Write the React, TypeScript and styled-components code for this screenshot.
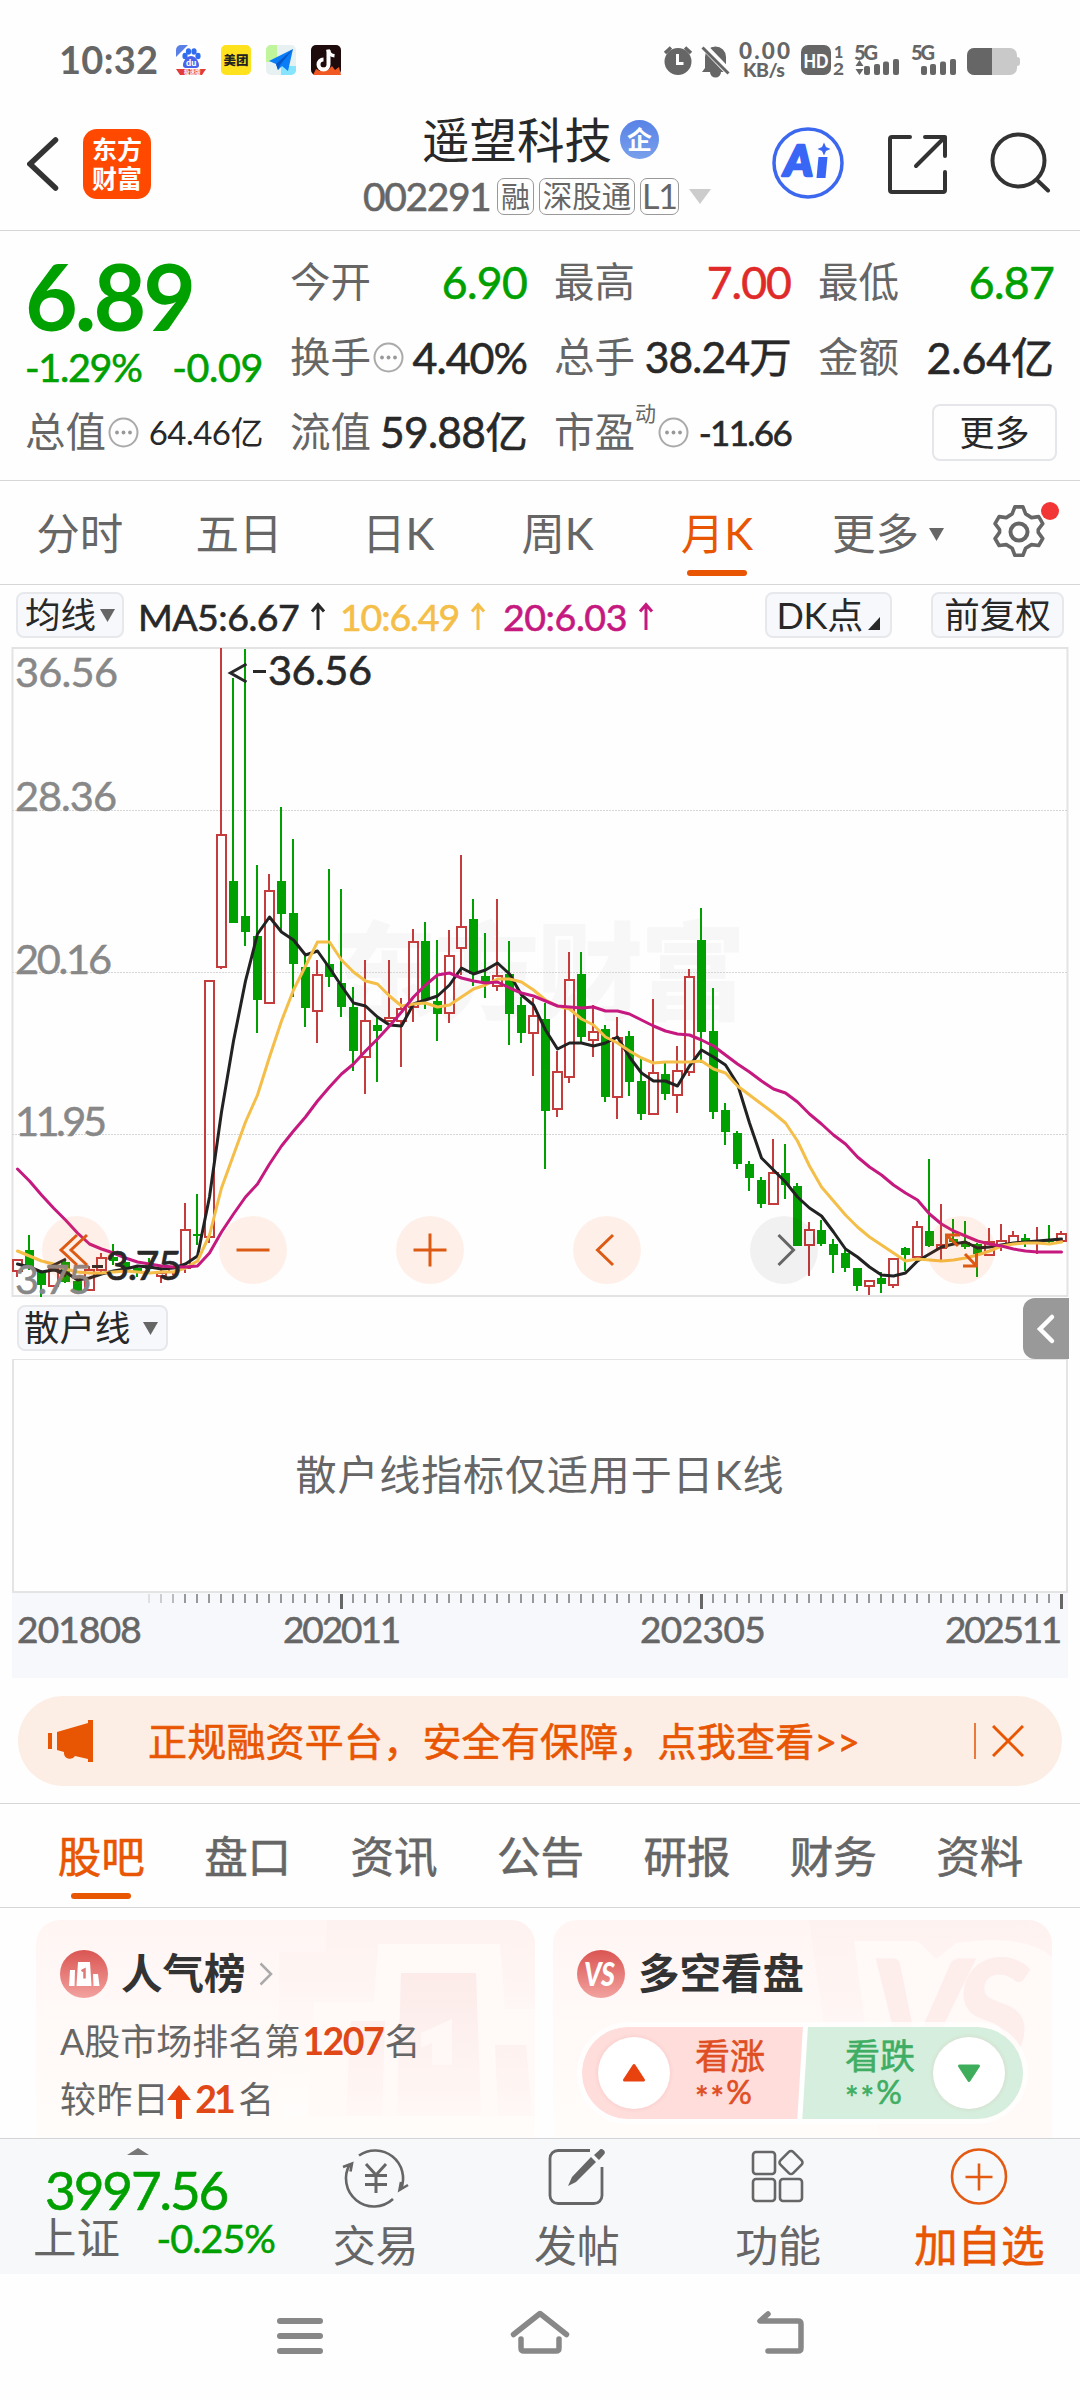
import React from 'react';
import styled, { createGlobalStyle } from 'styled-components';

const GREEN = '#00a000';
const RED = '#e02a2a';
const ORANGE = '#e85604';
const GREY = '#666';
const DARK = '#282828';
const RULE = '#d6d6d6';

const Global = createGlobalStyle`
  *, *::before, *::after { box-sizing: border-box; }
  body { margin: 0; background: #fff; }
  svg { display: block; flex: none; }
`;

const Screen = styled.main`
  width: 1080px;
  height: 2400px;
  overflow: hidden;
  display: flex;
  flex-direction: column;
  background: #fefefe;
  color: ${DARK};
  font-family: Lato, 'Noto Sans CJK SC', sans-serif;
`;

const Txt = styled.span<{ $s: number; $c?: string; $w?: number; $ls?: number }>`
  font-size: ${p => p.$s}px;
  color: ${p => p.$c ?? DARK};
  font-weight: ${p => p.$w ?? 400};
  letter-spacing: ${p => p.$ls ?? 0}px;
  line-height: 1;
  white-space: nowrap;
`;
const Num = styled(Txt)`
  -webkit-text-stroke: 0.6px currentColor;
`;

/* ---------- status bar ---------- */
const StatusBar = styled.div`
  height: 118px;
  padding: 40px 60px 0 59px;
  display: flex;
  align-items: flex-start;
`;
const Clock = styled.div`
  width: 117px;
  height: 38px;
  display: flex;
  align-items: center;
`;
const AppIcons = styled.div`
  display: flex;
  gap: 15px;
  padding-top: 5px;
`;
const StatusRight = styled.div`
  margin-left: auto;
  margin-top: -2px;
  display: flex;
`;

const StatusIcons = () => (
  <svg width="360" height="46" viewBox="660 38 360 46" fill={GREY} fontFamily="Lato, sans-serif" fontWeight="900">
    <circle cx="678" cy="61.500" r="13.500" />
    <path d="M665 53l6-5.500M691 53l-6-5.500" stroke={GREY} strokeWidth="3.500" />
    <path d="M677.500 54v9.500h6" stroke="#fff" strokeWidth="3" fill="none" />
    <path d="M705 68v-11a10.500 10.500 0 0 1 21 0v11l3 4h-27z M710 72a5.500 5.500 0 0 0 11 0z" />
    <path d="M703.500 46l26 27" stroke="#fefefe" strokeWidth="7" />
    <path d="M702.500 47.500l26 26" stroke={GREY} strokeWidth="3" />
    <text x="739" y="59" fontSize="22.500" textLength="51">0.00</text>
    <text x="743" y="77" fontSize="19.500" textLength="42">KB/s</text>
    <rect x="801" y="45" width="30" height="30" rx="7" />
    <text x="803.500" y="67.500" fontSize="19" fill="#fff" textLength="25" lengthAdjust="spacingAndGlyphs">HD</text>
    <text x="834" y="57.500" fontSize="16">1</text>
    <text x="833" y="74.500" fontSize="16" textLength="11" lengthAdjust="spacingAndGlyphs">2</text>
    <text x="854" y="59.500" fontSize="20" textLength="24">5G</text>
    <path d="M859.500 60l4 6h-8zM859.500 75l4-6h-8z" />
    <rect x="864" y="66" width="6" height="9" rx="2" /><rect x="874" y="64" width="6" height="11" rx="2" />
    <rect x="883" y="61.500" width="6" height="13.500" rx="2" /><rect x="893" y="59" width="6" height="16" rx="2" />
    <text x="911" y="59.500" fontSize="20" textLength="24">5G</text>
    <rect x="921" y="66" width="6" height="9" rx="2" /><rect x="930" y="64" width="6" height="11" rx="2" />
    <rect x="940" y="61.500" width="6" height="13.500" rx="2" /><rect x="950" y="59" width="6" height="16" rx="2" />
    <rect x="967" y="48" width="50" height="27" rx="7" fill="#c9c9c9" />
    <rect x="1014" y="57" width="6" height="9" rx="3" fill="#c9c9c9" />
    <path d="M992 48h-18a7 7 0 0 0-7 7v13a7 7 0 0 0 7 7h18z" />
  </svg>
);

const BaiduIcon = () => (
  <svg width="30" height="30" viewBox="0 0 30 30">
    <rect width="30" height="30" rx="5" fill="#fff" />
    <path d="M0 5a5 5 0 0 1 5-5h7L0 12z" fill="#5a7fe6" />
    <g fill="#2f6cf0">
      <ellipse cx="9" cy="11" rx="2.600" ry="3.200" /><ellipse cx="12.500" cy="6.500" rx="2.600" ry="3.200" />
      <ellipse cx="18" cy="6.500" rx="2.600" ry="3.200" /><ellipse cx="22" cy="11" rx="2.600" ry="3.200" />
      <path d="M15 11c4 0 8 5 8 9 0 4-4 3-8 3s-8 1-8-3c0-4 4-9 8-9z" fill="#4b63ea" />
    </g>
    <text x="10" y="20.500" fontSize="9" fontWeight="900" fill="#fff" fontFamily="Lato, sans-serif">du</text>
    <path d="M0 24h30l-4 6H4z" fill="#e23b3b" />
    <text x="8" y="29" fontSize="5.500" fontWeight="700" fill="#fff" fontFamily="'Noto Sans CJK SC', sans-serif">极速版</text>
  </svg>
);
const MeituanIcon = () => (
  <svg width="30" height="30" viewBox="0 0 30 30">
    <rect width="30" height="30" rx="5" fill="#ffe21e" />
    <text x="2.500" y="19.800" fontSize="12.500" fontWeight="900" fill="#222" fontFamily="'Noto Sans CJK SC', sans-serif">美团</text>
  </svg>
);
const MapIcon = () => (
  <svg width="30" height="30" viewBox="0 0 30 30">
    <rect width="30" height="30" rx="5" fill="#e8f1f2" />
    <path d="M5 0h6v17H0V5a5 5 0 0 1 5-5z" fill="#c0f59b" />
    <path d="M15 21h15v4a5 5 0 0 1-5 5H15z" fill="#86e4ff" />
    <path d="M27 4L3 16l7 3 2 6 4-4 6 5z" fill="#0a7cf5" />
    <path d="M27 4L10 19l2 6 2-5z" fill="#0657c9" />
  </svg>
);
const TiktokIcon = () => (
  <svg width="30" height="30" viewBox="0 0 30 30">
    <rect width="30" height="30" rx="5" fill="#1e0b0b" />
    <path d="M2 30l3-6 4 2 3-4 5 3 4-4 3 4 4-3 2 8z" fill="#f05a22" />
    <path d="M17.500 5v14.500a5 5 0 1 1-5-5" fill="none" stroke="#fff" strokeWidth="4" />
    <path d="M17 4.500c.7 4 3 6 6.500 6.300" fill="none" stroke="#fff" strokeWidth="3.600" />
  </svg>
);

/* ---------- header ---------- */
const Header = styled.header`
  height: 113px;
  padding: 0 29px 0 27px;
  border-bottom: 1px solid ${RULE};
  display: grid;
  grid-template-columns: 56px 68px 212px 350px 1fr;
`;
const BackBox = styled.div`padding-top: 18px;`;
const Logo = styled.div`
  width: 68px;
  height: 70px;
  margin-top: 11px;
  border-radius: 14px;
  background: #ff4800;
  display: flex;
  flex-direction: column;
  align-items: center;
  justify-content: center;
  gap: 4px;
`;
const TitleCol = styled.div`
  grid-column: 4;
  display: flex;
  flex-direction: column;
`;
const TitleRow = styled.div`
  height: 43px;
  padding-left: 59px;
  display: flex;
  align-items: center;
  gap: 8px;
`;
const Badge = styled.span`
  width: 39px;
  height: 39px;
  border-radius: 50%;
  background: linear-gradient(#5882e6, #78a0ec);
  display: grid;
  place-items: center;
`;
const CodeRow = styled.div`
  height: 70px;
  display: flex;
  align-items: center;
`;
const Tag = styled.span<{ $w: number }>`
  width: ${p => p.$w}px;
  height: 37px;
  margin-right: 5px;
  border: 1.5px solid #999;
  border-radius: 7px;
  display: grid;
  place-items: center;
`;
const HeaderIcons = styled.div`
  display: flex;
  justify-content: space-between;
  padding: 8px 0 0 59px;
`;

/* ---------- quote ---------- */
const Quote = styled.section`
  height: 250px;
  padding: 14px 26px 0 25px;
  border-bottom: 1px solid ${RULE};
  display: grid;
  grid-template-columns: 238px 237px 237px 236px;
  grid-template-rows: 75px 75px 75px;
  column-gap: 27px;
`;
const PriceBox = styled.div`
  grid-row: span 2;
  display: flex;
  flex-direction: column;
  padding-top: 6px;
`;
const PriceLine = styled.div`
  height: 88px;
  display: flex;
  align-items: center;
`;
const Spread = styled.div`
  height: 64px;
  display: flex;
  align-items: center;
  justify-content: space-between;
`;
const Field = styled.div`
  display: flex;
  align-items: center;
  > :last-child { margin-left: auto; }
`;
const Sup = styled.span`
  align-self: flex-start;
  padding-top: 7px;
  line-height: 0;
`;
const MoreButton = styled.button`
  width: 125px;
  height: 57px;
  margin-right: -3px;
  padding: 0;
  border: 2px solid #e4e6ea;
  border-radius: 8px;
  background: #fefefe;
  font: inherit;
`;
const DotsIcon = styled.svg`margin-left: 2px;`;
const Dots = () => (
  <DotsIcon width="31" height="31" viewBox="0 0 31 31">
    <circle cx="15.500" cy="15.500" r="14" fill="none" stroke="#aaa" strokeWidth="2" />
    <g fill="#999"><circle cx="9" cy="15.500" r="1.900" /><circle cx="15.500" cy="15.500" r="1.900" /><circle cx="22" cy="15.500" r="1.900" /></g>
  </DotsIcon>
);

/* ---------- period tabs ---------- */
const Periods = styled.nav`
  height: 104px;
  border-bottom: 1px solid ${RULE};
  display: grid;
  grid-template-columns: repeat(5, 159.300px) 1fr 88px;
`;
const Tab = styled.div<{ $on?: boolean }>`
  position: relative;
  padding-top: 3px;
  display: flex;
  align-items: center;
  justify-content: center;
  color: ${p => (p.$on ? ORANGE : GREY)};
  &::after {
    content: '';
    display: ${p => (p.$on ? 'block' : 'none')};
    position: absolute;
    bottom: 8px;
    left: calc(50% - 30px);
    width: 60px;
    height: 6px;
    border-radius: 3px;
    background: ${ORANGE};
  }
`;
const MoreTab = styled.div`
  display: flex;
  align-items: center;
  justify-content: flex-end;
  padding: 3px 48px 0 0;
  gap: 10px;
`;
const GearBox = styled.div`padding-top: 16px;`;

/* ---------- indicator toolbar ---------- */
const Toolbar = styled.div`
  height: 62px;
  padding: 7px 16px 0 16px;
  display: flex;
  align-items: flex-start;
`;
const Chip = styled.button<{ $w: number; $ml?: number }>`
  width: ${p => p.$w}px;
  height: 46px;
  margin: 0 0 0 ${p => p.$ml ?? 0}px;
  padding: 0;
  border: 2px solid #e6e8ec;
  border-radius: 8px;
  background: #f7f8fb;
  font: inherit;
  display: flex;
  align-items: center;
  justify-content: center;
  gap: 4px;
`;
const MaList = styled.div`
  width: 627px;
  height: 50px;
  padding-left: 14px;
  display: flex;
  align-items: center;
`;
const MaItem = styled.span<{ $w: number }>`
  width: ${p => p.$w}px;
  display: flex;
  align-items: center;
  gap: 10px;
`;

/* ---------- chart ---------- */
const ChartPanel = styled.section`
  position: relative;
  width: 1080px;
  height: 650px;
`;
const ChartControls = styled.div`
  position: absolute;
  left: 42px;
  right: 85px;
  top: 569px;
  display: flex;
  justify-content: space-between;
`;
const RoundControl = styled.div<{ $off?: boolean }>`
  width: 68px;
  height: 68px;
  border-radius: 50%;
  background: ${p => (p.$off ? 'rgba(0,0,0,.05)' : 'rgba(255,100,20,.09)')};
  color: ${p => (p.$off ? '#666' : '#dc5a14')};
`;
const ControlGlyph = ({ d }: { d: string }) => (
  <svg width="68" height="68" viewBox="-34 -34 68 68" fill="none" stroke="currentColor" strokeWidth="3"><path d={d} /></svg>
);

type Candle = [up: 0 | 1, high: number, top: number, bottom: number, low: number];
const CANDLES: Candle[] = [
  [1, 1260, 1260, 1271, 1277], [0, 1235, 1250, 1267, 1270], [0, 1270, 1272, 1285, 1297], [1, 1263, 1268, 1286, 1287],
  [0, 1260, 1262, 1282, 1283], [0, 1276, 1281, 1291, 1291], [1, 1266, 1270, 1290, 1290], [1, 1253, 1258, 1270, 1273],
  [0, 1244, 1257, 1261, 1265], [0, 1259, 1262, 1268, 1270], [0, 1266, 1268, 1273, 1277], [0, 1258, 1265, 1269, 1272],
  [1, 1265, 1273, 1276, 1283], [1, 1266, 1267, 1272, 1275], [1, 1203, 1230, 1268, 1273], [0, 1194, 1234, 1236, 1245],
  [1, 981, 981, 1237, 1243], [1, 648, 835, 967, 969], [0, 678, 881, 923, 923], [0, 649, 916, 932, 946],
  [0, 865, 936, 1000, 1033], [1, 874, 891, 1003, 1003], [0, 807, 881, 914, 932], [0, 839, 913, 964, 997],
  [0, 955, 967, 1008, 1027], [1, 960, 975, 1011, 1043], [0, 869, 964, 977, 987], [0, 889, 983, 1007, 1017],
  [0, 987, 1007, 1051, 1071], [1, 960, 1021, 1057, 1094], [0, 1018, 1025, 1031, 1082], [1, 960, 1018, 1021, 1022],
  [1, 998, 1009, 1021, 1067], [1, 929, 942, 1007, 1022], [0, 922, 941, 1000, 1009], [0, 940, 1001, 1014, 1041],
  [1, 930, 956, 1013, 1023], [1, 855, 927, 948, 975], [0, 899, 919, 974, 986], [0, 933, 976, 982, 998],
  [1, 899, 976, 986, 991], [0, 941, 974, 1014, 1045], [0, 997, 1005, 1033, 1043], [1, 998, 1016, 1033, 1076],
  [0, 1003, 1019, 1111, 1169], [1, 1051, 1072, 1109, 1117], [1, 952, 980, 1077, 1083], [0, 952, 974, 1037, 1043],
  [1, 1005, 1032, 1040, 1057], [0, 1025, 1029, 1097, 1102], [1, 1017, 1038, 1097, 1119], [0, 1031, 1036, 1082, 1096],
  [0, 1059, 1081, 1114, 1120], [1, 999, 1073, 1114, 1115], [0, 1062, 1074, 1094, 1100], [1, 1046, 1071, 1095, 1113],
  [1, 969, 977, 1072, 1076], [0, 908, 940, 1032, 1063], [0, 988, 1031, 1112, 1119], [0, 1103, 1110, 1132, 1145],
  [0, 1131, 1133, 1164, 1169], [0, 1161, 1164, 1178, 1191], [0, 1177, 1180, 1204, 1208], [1, 1139, 1173, 1204, 1205],
  [0, 1144, 1173, 1185, 1199], [0, 1183, 1186, 1246, 1246], [1, 1222, 1230, 1245, 1276], [0, 1220, 1230, 1244, 1246],
  [0, 1239, 1244, 1255, 1273], [0, 1250, 1253, 1268, 1272], [0, 1268, 1268, 1286, 1291], [1, 1281, 1281, 1286, 1295],
  [0, 1272, 1278, 1284, 1293], [1, 1259, 1259, 1285, 1288], [0, 1247, 1248, 1255, 1271], [1, 1221, 1227, 1257, 1259],
  [0, 1159, 1231, 1246, 1247], [1, 1204, 1245, 1248, 1260], [0, 1219, 1239, 1242, 1244], [0, 1221, 1242, 1247, 1249],
  [0, 1243, 1244, 1254, 1277], [1, 1228, 1242, 1255, 1255], [1, 1224, 1241, 1245, 1251], [1, 1231, 1236, 1243, 1245],
  [0, 1234, 1238, 1243, 1247], [1, 1227, 1241, 1242, 1254], [0, 1225, 1240, 1242, 1245], [1, 1231, 1234, 1241, 1241],
];
const MA5 = [1264, 1267, 1272, 1270, 1272, 1280, 1278, 1274, 1271, 1269, 1266, 1267, 1269, 1268, 1264, 1256, 1197, 1112, 1041, 981, 934, 917, 932, 940, 955, 951, 968, 986, 1003, 1006, 1017, 1025, 1026, 1004, 1000, 996, 985, 968, 974, 970, 963, 974, 995, 1005, 1030, 1049, 1043, 1043, 1046, 1043, 1037, 1057, 1073, 1081, 1081, 1086, 1066, 1050, 1057, 1065, 1084, 1123, 1158, 1170, 1182, 1197, 1208, 1216, 1232, 1249, 1257, 1267, 1275, 1276, 1273, 1261, 1254, 1247, 1244, 1242, 1248, 1247, 1245, 1243, 1242, 1241, 1240, 1239];
const MA10 = [1251, 1256, 1261, 1264, 1269, 1272, 1273, 1273, 1272, 1271, 1272, 1273, 1272, 1272, 1268, 1261, 1235, 1188, 1155, 1122, 1095, 1057, 1021, 990, 966, 942, 942, 960, 972, 981, 984, 996, 1006, 1004, 1003, 1007, 1005, 997, 989, 985, 979, 979, 982, 990, 1000, 1006, 1009, 1019, 1025, 1037, 1043, 1051, 1058, 1063, 1062, 1062, 1062, 1061, 1069, 1073, 1086, 1095, 1104, 1113, 1123, 1141, 1166, 1187, 1201, 1215, 1227, 1237, 1245, 1253, 1261, 1259, 1260, 1261, 1260, 1258, 1255, 1251, 1246, 1244, 1243, 1243, 1244, 1242];
const MA20 = [1169, 1181, 1195, 1208, 1220, 1233, 1244, 1249, 1253, 1258, 1262, 1264, 1266, 1267, 1267, 1266, 1253, 1232, 1214, 1197, 1184, 1164, 1146, 1131, 1117, 1101, 1087, 1074, 1064, 1051, 1039, 1026, 1012, 997, 985, 975, 973, 978, 981, 983, 982, 988, 993, 996, 1001, 1006, 1007, 1008, 1007, 1011, 1011, 1014, 1020, 1026, 1031, 1034, 1035, 1040, 1046, 1055, 1064, 1072, 1081, 1089, 1093, 1102, 1114, 1124, 1135, 1144, 1157, 1167, 1175, 1185, 1193, 1200, 1214, 1224, 1231, 1236, 1241, 1244, 1246, 1249, 1251, 1252, 1252, 1252];

const xAt = (i: number) => 17 + 12 * i;
const line = (ys: number[]) => ys.map((y, i) => `${xAt(i) + 0.5},${y}`).join(' ');

const Candlestick = ({ c, i }: { c: Candle; i: number }) => {
  const [up, high, top, bottom, low] = c;
  const x = xAt(i);
  if (!up) {
    return (
      <g fill="#00a000">
        <rect x={x - 1} y={high} width="2" height={low - high} />
        <rect x={x - 4} y={top} width="9" height={Math.max(2, bottom - top)} />
      </g>
    );
  }
  return (
    <g fill="#c43c3c">
      <rect x={x - 1} y={high} width="2" height={top - high} />
      <rect x={x - 1} y={bottom} width="2" height={low - bottom} />
      <rect x={x - 4} y={top} width="9" height={Math.max(1, bottom - top)} fill="none" stroke="#c43c3c" strokeWidth="2" />
    </g>
  );
};

const KLineChart = () => (
  <svg width="1080" height="650" viewBox="0 647 1080 650" fontFamily="Lato, 'Noto Sans CJK SC', sans-serif">
    <text x="331" y="1011" fontSize="106" fontWeight="900" fill="#f7f7f7" textLength="415">东方财富</text>
    <rect x="12.500" y="648" width="1055" height="648" fill="none" stroke="#e3e3e3" strokeWidth="2" />
    {[810.500, 972.500, 1134.500].map(y => (
      <path key={y} d={`M12 ${y}H1068`} stroke="#d6d6d6" strokeWidth="1" strokeDasharray="2 1" />
    ))}
    {CANDLES.map((c, i) => <Candlestick key={i} c={c} i={i} />)}
    <g fill="none" strokeWidth="3" strokeLinejoin="round" strokeLinecap="round">
      <polyline points={line(MA5)} stroke="#222" />
      <polyline points={line(MA10)} stroke="#f4be48" />
      <polyline points={line(MA20)} stroke="#c5197f" />
    </g>
    <g fill="none" stroke={DARK} strokeWidth="3">
      <path d="M246.500 664l-16 9 16 9M253 671.500h13" />
      <path d="M66 1259l-16 8 16 9" /><path d="M92 1266.500h11" />
    </g>
    <g fontSize="41.500" fill="#888" stroke="#888" strokeWidth=".5">
      <text x="15" y="687" textLength="103">36.56</text>
      <text x="15" y="811" textLength="102">28.36</text>
      <text x="15" y="974" textLength="97">20.16</text>
      <text x="15" y="1136" textLength="92">11.95</text>
      <text x="15" y="1294" textLength="77">3.75</text>
    </g>
    <g fontSize="41.500" fill={DARK} stroke={DARK} strokeWidth=".6">
      <text x="268" y="685" textLength="104">36.56</text>
      <text x="105" y="1280" textLength="77">3.75</text>
    </g>
  </svg>
);

/* ---------- sub indicator ---------- */
const SubHeader = styled.div`
  height: 62px;
  padding-left: 17px;
  padding-right: 11px;
  display: flex;
  justify-content: space-between;
`;
const SubChip = styled.button`
  width: 151px;
  height: 46px;
  margin: 8px 0 0;
  padding: 0 8px 0 5px;
  border: 2px solid #e6e8ec;
  border-radius: 8px;
  background: #f7f8fb;
  font: inherit;
  display: flex;
  align-items: center;
  justify-content: space-between;
`;
const SideHandle = styled.div`
  width: 46px;
  height: 61px;
  margin-top: 1px;
  border-radius: 12px 0 0 12px;
  background: #999;
  display: grid;
  place-items: center;
`;
const SubPanel = styled.div`
  height: 234px;
  margin: 0 12px;
  padding-bottom: 2px;
  border: 2px solid #e4e4e4;
  border-top-width: 1px;
  display: grid;
  place-items: center;
`;
const Axis = styled.div`
  height: 85px;
  margin: 0 12px;
  background: #f7f8fb;
`;
const AxisLabels = styled.div`
  height: 36px;
  padding: 0 8px 0 5px;
  display: grid;
  grid-template-columns: 266px 357px 1fr auto;
  align-items: center;
`;
const Ticks = () => (
  <svg width="1056" height="17" viewBox="12 1593 1056 17">
    {Array.from({ length: 77 }, (_, k) => {
      const i = k + 11;
      const major = i === 27 || i === 57 || i === 87;
      return (
        <rect key={i} x={xAt(i) - 1} y="1594" width={major ? 3 : 2} height={major ? 15 : 9}
          fill={major ? '#666' : '#999'} opacity={i < 14 ? 0.25 + (i - 11) * 0.2 : 1} />
      );
    })}
  </svg>
);

/* ---------- promo banner ---------- */
const Banner = styled.div`
  height: 90px;
  margin: 18px 18px 0;
  padding: 0 38px 0 30px;
  border-radius: 45px;
  background: #fdeee5;
  display: flex;
  align-items: center;
`;
const BannerText = styled.div`
  flex: 1;
  padding-left: 52px;
`;
const BannerRule = styled.div`
  width: 2px;
  height: 36px;
  margin-right: 16px;
  background: #ea7a3c;
`;

/* ---------- content tabs ---------- */
const ContentTabs = styled.nav`
  height: 105px;
  margin-top: 17px;
  padding: 0 27px 0 28px;
  border-top: 1px solid ${RULE};
  border-bottom: 1px solid ${RULE};
  display: grid;
  grid-template-columns: repeat(7, 1fr);
`;

/* ---------- cards ---------- */
const Cards = styled.section`
  height: 230px;
  padding: 12px 28px 0 36px;
  display: grid;
  grid-template-columns: 499px 499px;
  gap: 18px;
  overflow: hidden;
`;
const Card = styled.article`
  position: relative;
  height: 240px;
  padding: 30px 24px 0;
  border-radius: 24px 24px 0 0;
  background: linear-gradient(#fff6f4, #fffdfb);
  overflow: hidden;
`;
const CardArt = styled.svg`
  position: absolute;
  inset: 0;
`;
const CardBody = styled.div`
  position: relative;
  display: flex;
  flex-direction: column;
`;
const CardTitle = styled.div`
  height: 48px;
  display: flex;
  align-items: center;
  gap: 13px;
`;
const CardLine = styled.div`
  height: 58px;
  display: flex;
  align-items: center;
`;
const Lines = styled.div`padding-top: 14px;`;
const Rank = styled(Txt)`margin: 0 1px 0 2px;`;
const Delta = styled(Txt)`width: 43px;`;
const DeltaArrow = styled.svg`margin: 6px 4px 0 -2px;`;
const Vote = styled.div`
  width: 451px;
  height: 102px;
  margin: 24px 0 0 0;
  border: 5px solid rgba(255, 255, 255, 0.75);
  border-radius: 51px;
  background: linear-gradient(93.500deg, #fedddb 0 220px, #fff 221px 225px, #d6eedd 226px);
  background-clip: padding-box;
  display: grid;
  grid-template-columns: 16px 72px 25px 150px 88px 72px;
  align-items: center;
`;
const VoteKnob = styled.div<{ $col: number }>`
  grid-row: 1;
  grid-column: ${p => p.$col};
  width: 72px;
  height: 72px;
  border-radius: 50%;
  background: #fff;
  box-shadow: 0 0 4px rgba(200, 60, 50, 0.12);
  display: grid;
  place-items: center;
`;
const VoteLabel = styled.div<{ $col: number }>`
  grid-row: 1;
  grid-column: ${p => p.$col};
  display: flex;
  flex-direction: column;
  gap: 3px;
`;
const Stars = styled.span`
  vertical-align: -6px;
  line-height: 0;
  letter-spacing: 2px;
`;

/* ---------- bottom bar ---------- */
const BottomBar = styled.footer`
  height: 136px;
  border-top: 1px solid #d2d4d8;
  background: #f7f8fa;
  display: grid;
  grid-template-columns: 275px repeat(4, 1fr);
`;
const IndexBox = styled.div`
  padding: 9px 0 0 33px;
  display: flex;
  flex-direction: column;
`;
const IndexValue = styled.div`
  height: 52px;
  padding: 6px 0 0 12px;
  margin-top: 5px;
  display: flex;
  align-items: center;
`;
const IndexRow = styled.div`
  height: 52px;
  display: flex;
  align-items: center;
  justify-content: space-between;
`;
const ExpandMark = styled.svg`margin-left: 94px;`;
const Action = styled.div`
  display: flex;
  flex-direction: column;
  align-items: center;
  padding-top: 5px;
  gap: 14px;
`;
const SystemNav = styled.div`
  flex: 1;
  padding: 32px 180px 0;
  display: grid;
  grid-template-columns: repeat(3, 240px);
  justify-items: center;
`;

const CodeText = styled(Num)`width: 134px;`;
const CodeCaret = styled.svg`margin-left: 5px;`;
const LoweredSvg = styled.svg<{ $mt: number }>`margin-top: ${p => p.$mt}px;`;

const Caret = ({ w = 15, h = 13, c = '#666' }: { w?: number; h?: number; c?: string }) => (
  <svg width={w} height={h} viewBox="0 0 10 10" preserveAspectRatio="none"><path d="M0 0h10L5 10z" fill={c} /></svg>
);
const UpArrow = ({ c }: { c: string }) => (
  <svg width="18" height="30" viewBox="0 0 18 30" fill="none" stroke={c} strokeWidth="3"><path d="M9 28V3M3 9.500l6-7 6 7" /></svg>
);

const MAS = [
  { t: 'MA5:6.67', c: DARK, w: 202, ls: -0.5 },
  { t: '10:6.49', c: '#f4be48', w: 163, ls: -1.1 },
  { t: '20:6.03', c: '#c5197f', w: 160, ls: -0.4 },
];

export default function App() {
  return (
    <Screen>
      <Global />
      <StatusBar>
        <Clock><Txt $s={38} $w={700} $c={GREY} $ls={0.3}>10:32</Txt></Clock>
        <AppIcons><BaiduIcon /><MeituanIcon /><MapIcon /><TiktokIcon /></AppIcons>
        <StatusRight><StatusIcons /></StatusRight>
      </StatusBar>

      <Header>
        <BackBox>
          <svg width="32" height="56" viewBox="0 0 32 56" fill="none" stroke="#333" strokeWidth="5.500" strokeLinecap="round"><path d="M28.500 4L3 28l25.500 24" /></svg>
        </BackBox>
        <Logo><Txt $s={25} $w={700} $c="#fff">东方</Txt><Txt $s={25} $w={700} $c="#fff">财富</Txt></Logo>
        <TitleCol>
          <TitleRow>
            <Txt $s={47.500}>遥望科技</Txt>
            <Badge><Txt $s={25} $w={700} $c="#fff">企</Txt></Badge>
          </TitleRow>
          <CodeRow>
            <CodeText $s={39} $c={GREY} $ls={-1.400}>002291</CodeText>
            <Tag $w={37}><Txt $s={29} $c={GREY}>融</Txt></Tag>
            <Tag $w={96}><Txt $s={29.500} $c={GREY}>深股通</Txt></Tag>
            <Tag $w={39}><Txt $s={34} $c={GREY} $ls={-1}>L1</Txt></Tag>
            <CodeCaret width="22" height="15" viewBox="0 0 22 15"><path d="M0 0h22L11 15z" fill="#ccc" /></CodeCaret>
          </CodeRow>
        </TitleCol>
        <HeaderIcons>
          <svg width="74" height="74" viewBox="0 0 74 74">
            <circle cx="36" cy="37" r="34" fill="none" stroke="#3c68f0" strokeWidth="3.500" />
            <text x="12" y="50" fontSize="42" fontWeight="900" fontStyle="italic" fill="#3a66f6" stroke="#3a66f6" strokeWidth="2.500" strokeLinejoin="round" fontFamily="Lato, sans-serif" textLength="29" lengthAdjust="spacingAndGlyphs">A</text>
            <path d="M46.500 31h9l-2 21h-9z" fill="#3a66f6" />
            <path d="M52 16.500l2 4.500 4.500 2-4.500 2-2 4.500-2-4.500-4.500-2 4.500-2z" fill="#3a66f6" />
          </svg>
          <LoweredSvg $mt={7} width="60" height="64" viewBox="0 0 60 64" fill="none" stroke="#333" strokeWidth="4" strokeLinecap="round" strokeLinejoin="round">
            <path d="M22 4H4q-2 0-2 2v51q0 2 2 2h51q2 0 2-2V39M37 4h20v19M57 4L28 33" />
          </LoweredSvg>
          <LoweredSvg $mt={5} width="62" height="62" viewBox="0 0 62 62" fill="none" stroke="#333" strokeWidth="4" strokeLinecap="round">
            <circle cx="29.500" cy="29.500" r="26" /><path d="M48.500 49.500L59 59.500" />
          </LoweredSvg>
        </HeaderIcons>
      </Header>

      <Quote>
        <PriceBox>
          <PriceLine><Txt $s={91} $w={700} $c={GREEN} $ls={-3}>6.89</Txt></PriceLine>
          <Spread><Num $s={39.500} $c={GREEN} $ls={-1.300}>-1.29%</Num><Num $s={39.500} $c={GREEN} $ls={-0.4}>-0.09</Num></Spread>
        </PriceBox>
        <Field><Txt $s={40.500} $c={GREY}>今开</Txt><Num $s={44.500} $c={GREEN} $ls={-0.700}>6.90</Num></Field>
        <Field><Txt $s={40.500} $c={GREY}>最高</Txt><Num $s={44.500} $c={RED} $ls={-0.900}>7.00</Num></Field>
        <Field><Txt $s={40.500} $c={GREY}>最低</Txt><Num $s={44.500} $c={GREEN} $ls={-0.700}>6.87</Num></Field>
        <Field><Txt $s={40.500} $c={GREY}>换手</Txt><Dots /><Num $s={43} $ls={-1}>4.40%</Num></Field>
        <Field><Txt $s={40.500} $c={GREY}>总手</Txt><Num $s={42.500} $ls={-0.800}>38.24万</Num></Field>
        <Field><Txt $s={40.500} $c={GREY}>金额</Txt><Num $s={43} $ls={-0.100}>2.64亿</Num></Field>
        <Field><Txt $s={40.500} $c={GREY}>总值</Txt><Dots /><Txt $s={33} $ls={-0.500}>64.46亿</Txt></Field>
        <Field><Txt $s={40.500} $c={GREY}>流值</Txt><Num $s={42.500} $ls={-0.700}>59.88亿</Num></Field>
        <Field><Txt $s={40.500} $c={GREY}>市盈</Txt><Sup><Txt $s={21} $c={GREY}>动</Txt></Sup><Dots /><Num $s={35} $ls={-1.700}>-11.66</Num></Field>
        <Field><MoreButton><Txt $s={35}>更多</Txt></MoreButton></Field>
      </Quote>

      <Periods>
        {['分时', '五日', '日K', '周K', '月K'].map(t => (
          <Tab key={t} $on={t === '月K'}><Txt $s={43.500} $c="inherit">{t}</Txt></Tab>
        ))}
        <MoreTab><Txt $s={43.500} $c={GREY}>更多</Txt><Caret /></MoreTab>
        <GearBox>
          <svg width="68" height="70" viewBox="0 0 68 70">
            <path d="M21.500 11.500h9l3 7.500 6.500 4 8-1 4.500 7.500-5 6.500v3l5 6.500-4.500 7.500-8-1-6.500 4-3 7.500h-9l-3-7.500-6.500-4-8 1L-.5 45.500l5-6.500v-3l-5-6.500L4 22l8 1 6.500-4z" transform="translate(3.500 -.8) scale(.9 .93)" fill="none" stroke="#666" strokeWidth="4" strokeLinejoin="round" />
            <circle cx="27" cy="35" r="8.500" fill="none" stroke="#666" strokeWidth="4" />
            <circle cx="58" cy="14" r="9" fill="#f23535" />
          </svg>
        </GearBox>
      </Periods>

      <Toolbar>
        <Chip $w={108}><Txt $s={35.500}>均线</Txt><Caret /></Chip>
        <MaList>
          {MAS.map(m => (
            <MaItem key={m.t} $w={m.w}><Num $s={37.500} $c={m.c} $ls={m.ls}>{m.t}</Num><UpArrow c={m.c} /></MaItem>
          ))}
        </MaList>
        <Chip $w={127} $ml={15}>
          <Txt $s={36} $ls={-0.2}>DK点</Txt>
          <svg width="14" height="34" viewBox="0 0 14 34"><path d="M13 19v13H1z" fill={DARK} /></svg>
        </Chip>
        <Chip $w={133} $ml={39}><Txt $s={35.500}>前复权</Txt></Chip>
      </Toolbar>

      <ChartPanel>
        <KLineChart />
        <ChartControls>
          <RoundControl><ControlGlyph d="M1 -15L-15 0L1 15M11 -15L-5 0L11 15" /></RoundControl>
          <RoundControl><ControlGlyph d="M-16.500 0H16.500" /></RoundControl>
          <RoundControl><ControlGlyph d="M-16.500 0H16.500M0 -16.500V16.500" /></RoundControl>
          <RoundControl><ControlGlyph d="M6 -15L-9.500 0L6 15" /></RoundControl>
          <RoundControl $off><ControlGlyph d="M-5.500 -15L9.500 0L-5.500 15" /></RoundControl>
          <RoundControl><ControlGlyph d="M-14.500 -2V-15H-1M-14.500 -15L-3 -4M2 16H15.500V3M15.500 16L4 4" /></RoundControl>
        </ChartControls>
      </ChartPanel>

      <SubHeader>
        <SubChip><Txt $s={35.500}>散户线</Txt><Caret /></SubChip>
        <SideHandle>
          <svg width="20" height="32" viewBox="0 0 20 32" fill="none" stroke="#fff" strokeWidth="4.500" strokeLinecap="round"><path d="M16 4L4 16l12 12" /></svg>
        </SideHandle>
      </SubHeader>
      <SubPanel><Txt $s={41} $c={GREY} $ls={0.9}>散户线指标仅适用于日K线</Txt></SubPanel>
      <Axis>
        <Ticks />
        <AxisLabels>
          {['201808', '202011', '202305', '202511'].map((t, i) => (
            <Num key={t} $s={37} $c={GREY} $ls={[-0.8, -2.1, -0.6, -2.3][i]}>{t}</Num>
          ))}
        </AxisLabels>
      </Axis>

      <Banner>
        <svg width="48" height="42" viewBox="0 0 48 42" fill={ORANGE}>
          <path d="M0 13h4v16H0zM9 12L40 3V0h5v42h-5v-3l-13-3a6 6 0 0 1-11-4l-7-2z" />
        </svg>
        <BannerText><Num $s={39} $c={ORANGE} $ls={0.2}>正规融资平台，安全有保障，点我查看&gt;&gt;</Num></BannerText>
        <BannerRule />
        <svg width="32" height="32" viewBox="0 0 32 32" stroke={ORANGE} strokeWidth="3"><path d="M1 1l30 30M31 1L1 31" /></svg>
      </Banner>

      <ContentTabs>
        {['股吧', '盘口', '资讯', '公告', '研报', '财务', '资料'].map((t, i) => (
          <Tab key={t} $on={i === 0}><Num $s={43.500} $c="inherit">{t}</Num></Tab>
        ))}
      </ContentTabs>

      <Cards>
        <Card>
          <CardArt width="499" height="240" viewBox="0 0 499 240">
            <defs>
              <linearGradient id="fade" x1="0" y1="0" x2="0" y2="1"><stop offset="0" stopColor="#fcebe9" /><stop offset="1" stopColor="#fff8f6" /></linearGradient>
              <linearGradient id="halo" x1="0" y1="0" x2="0" y2="1"><stop offset="0" stopColor="#fef2f0" /><stop offset="1" stopColor="#fffdfb" /></linearGradient>
            </defs>
            <path d="M291 0h208v196H243V32h46z" fill="url(#halo)" />
            <path d="M342 24h122l5 65h30v107H272l6-114h60z" fill="#fff9f7" />
            <path d="M365 53h75l5 143h-84zM315 101h34l-3 95h-36zM459 125h31l6 71h-34z" fill="url(#fade)" />
            <path d="M385 113l31-14v46h-20v-22l-11 5z" fill="#fff8f6" />
          </CardArt>
          <CardBody>
            <CardTitle>
              <svg width="48" height="48" viewBox="0 0 48 48">
                <defs><linearGradient id="coin" x1="0" y1="0" x2="0" y2="1"><stop offset="0" stopColor="#da5552" /><stop offset="1" stopColor="#f2a29f" /></linearGradient></defs>
                <circle cx="24" cy="24" r="24" fill="url(#coin)" />
                <path d="M18 12h12l1.500 24h-15zM10 20h5l-.5 16H9zM33 24h5l1.500 12h-6z" fill="#fff" />
                <path d="M21.500 21l3-1.500v9" stroke="#e07774" strokeWidth="2.500" fill="none" />
              </svg>
              <Txt $s={41.500} $w={700} $c="#333">人气榜</Txt>
              <svg width="14" height="24" viewBox="0 0 14 24" fill="none" stroke="#aaa" strokeWidth="2.500"><path d="M1.500 1.500L12 12 1.500 22.500" /></svg>
            </CardTitle>
            <Lines>
              <CardLine>
                <Txt $s={36} $c={GREY}>A股市场排名第</Txt>
                <Rank $s={37.500} $w={700} $c="#e04818" $ls={-1.5}>1207</Rank>
                <Txt $s={36} $c={GREY}>名</Txt>
              </CardLine>
              <CardLine>
                <Txt $s={36} $c={GREY} $ls={0.4}>较昨日</Txt>
                <DeltaArrow width="24" height="34" viewBox="0 0 24 34" fill="#e8420f"><path d="M12 0l12 15H15v17a3 3 0 0 1-6 0V15H0z" /></DeltaArrow>
                <Delta $s={37.500} $w={700} $c="#e04818" $ls={-3}>21</Delta>
                <Txt $s={36} $c={GREY}>名</Txt>
              </CardLine>
            </Lines>
          </CardBody>
        </Card>
        <Card>
          <CardArt width="499" height="240" viewBox="0 0 499 240">
            <path d="M256 0h243v240H290z" fill="url(#halo)" />
            <path d="M301 21h64l18 18 20-16q70-10 96 14v203H330z" fill="#fff9f7" />
            <text x="316" y="148" fontSize="150" fontWeight="900" fontStyle="italic" fill="#fdeeec" fontFamily="Lato, sans-serif" letterSpacing="-12">VS</text>
          </CardArt>
          <CardBody>
            <CardTitle>
              <svg width="48" height="48" viewBox="0 0 48 48">
                <circle cx="24" cy="24" r="24" fill="url(#coin)" />
                <text x="7" y="36" fontSize="33" fontWeight="900" fontStyle="italic" fill="#fff" fontFamily="Lato, sans-serif" textLength="31" lengthAdjust="spacingAndGlyphs">VS</text>
              </svg>
              <Txt $s={41.500} $w={700} $c="#333">多空看盘</Txt>
            </CardTitle>
            <Vote>
              <VoteKnob $col={2}>
                <svg width="24" height="20" viewBox="0 0 24 20"><path d="M12 2.500L21.500 17h-19z" fill="#e8420f" stroke="#e8420f" strokeWidth="3" strokeLinejoin="round" /></svg>
              </VoteKnob>
              <VoteLabel $col={4}><Num $s={35} $c="#e04e24">看涨</Num><Num $s={32} $c="#e04e24"><Stars>**</Stars>%</Num></VoteLabel>
              <VoteLabel $col={5}><Num $s={35} $c="#3fae64">看跌</Num><Num $s={32} $c="#3fae64"><Stars>**</Stars>%</Num></VoteLabel>
              <VoteKnob $col={6}>
                <svg width="24" height="20" viewBox="0 0 24 20"><path d="M12 17.500L2.500 3h19z" fill="#3fae5c" stroke="#3fae5c" strokeWidth="3" strokeLinejoin="round" /></svg>
              </VoteKnob>
            </Vote>
          </CardBody>
        </Card>
      </Cards>

      <BottomBar>
        <IndexBox>
          <ExpandMark width="22" height="7" viewBox="0 0 22 7"><path d="M11 0l11 7H0z" fill="#777" /></ExpandMark>
          <IndexValue><Num $s={53} $c={GREEN} $ls={-2.100}>3997.56</Num></IndexValue>
          <IndexRow><Txt $s={43.500} $c={GREY}>上证</Txt><Num $s={39.500} $c={GREEN} $ls={-1}>-0.25%</Num></IndexRow>
        </IndexBox>
        <Action>
          <svg width="68" height="66" viewBox="0 0 68 66" fill="none" stroke="#666" strokeWidth="2.600">
            <path d="M17 11.500A28 28 0 0 1 59 45M51 55A28 28 0 0 1 8 20M1 23l9-3.500-1.500 8M66 41l-8.500 5 1.500-8" />
            <path d="M24 20l10 11 10-11M23 31.500h22M23 40.500h22M34 31v18" strokeWidth="3" />
          </svg>
          <Txt $s={43} $c={GREY}>交易</Txt>
        </Action>
        <Action>
          <svg width="60" height="66" viewBox="0 0 60 66">
            <path d="M43 6.500H11a8 8 0 0 0-8 8v37a8 8 0 0 0 8 8h36a8 8 0 0 0 8-8V23" fill="none" stroke="#666" strokeWidth="2.800" />
            <path d="M21 42l4-9 19-20 5 5-20 20zM47 11l5-4.500a3 3 0 0 1 5 4L52 16z" fill="#666" />
          </svg>
          <Txt $s={43} $c={GREY}>发帖</Txt>
        </Action>
        <Action>
          <svg width="60" height="66" viewBox="0 0 60 66" fill="none" stroke="#666" strokeWidth="2.600">
            <rect x="5" y="8" width="22" height="22" rx="3" /><rect x="5" y="35" width="22" height="22" rx="3" /><rect x="32" y="35" width="22" height="22" rx="3" />
            <rect x="34" y="9.500" width="18" height="18" rx="3" transform="rotate(45 43 18.500)" />
          </svg>
          <Txt $s={43} $c={GREY}>功能</Txt>
        </Action>
        <Action>
          <svg width="60" height="66" viewBox="0 0 60 66" fill="none" stroke="#e35a12" strokeWidth="2.600">
            <circle cx="30" cy="32.500" r="27" /><path d="M30 19.500v27M16.500 33h27" />
          </svg>
          <Num $s={43.500} $c={ORANGE}>加自选</Num>
        </Action>
      </BottomBar>

      <SystemNav>
        <svg width="50" height="50" viewBox="0 0 50 50" stroke="#888" strokeWidth="6" strokeLinecap="round"><path d="M5 15h40M5 30h40M5 45h40" /></svg>
        <svg width="62" height="50" viewBox="0 0 62 50" fill="none" stroke="#888" strokeWidth="5.500" strokeLinecap="round" strokeLinejoin="round"><path d="M4.500 28.500L31 7.500l26.500 21M12 33v9q0 3 3 3h32q3 0 3-3v-9" /></svg>
        <svg width="50" height="50" viewBox="0 0 50 50" fill="none" stroke="#888" strokeWidth="5.500" strokeLinecap="round" strokeLinejoin="round"><path d="M13 8L5 15h38q3 0 3 3v24q0 3-3 3H13" /></svg>
      </SystemNav>
    </Screen>
  );
}
